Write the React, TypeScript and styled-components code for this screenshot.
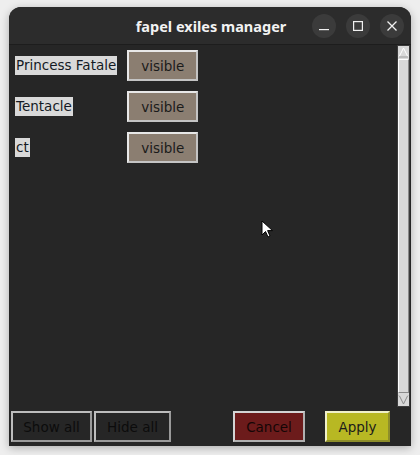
import React from "react";
import styled, { createGlobalStyle } from "styled-components";

const GlobalStyle = createGlobalStyle`
  html, body {
    margin: 0;
    padding: 0;
    background: #eeeeee;
  }
  body {
    width: 420px;
    height: 455px;
    overflow: hidden;
  }
`;

const Window = styled.div`
  position: relative;
  margin: 7px 9px 0 9px;
  width: 402px;
  height: 439px;
  border-radius: 12px 12px 0 0;
  background: #262626;
  box-shadow: 0 2px 9px rgba(0, 0, 0, 0.28);
  display: flex;
  flex-direction: column;
  overflow: hidden;
`;

const TitleBar = styled.div`
  position: relative;
  height: 37px;
  flex: none;
  background: #2c2c2c;
  border-bottom: 1px solid #1d1d1d;
  display: flex;
  align-items: center;
  justify-content: center;
`;

const Title = styled.div`
  font-family: "Noto Sans", "DejaVu Sans", sans-serif;
  font-weight: 700;
  font-size: 14.5px;
  color: #f2f2f2;
  margin-left: 2px;
`;

const Controls = styled.div`
  position: absolute;
  right: 7px;
  top: 7px;
  display: flex;
  gap: 10px;
`;

const CircleButton = styled.div`
  width: 24px;
  height: 24px;
  border-radius: 50%;
  background: #3b3b3b;
  display: flex;
  align-items: center;
  justify-content: center;
`;

const Body = styled.div`
  flex: 1;
  display: flex;
  min-height: 0;
`;

const ListArea = styled.div`
  flex: 1;
  padding: 5px 0 0 6px;
`;

const ExileGrid = styled.div`
  display: grid;
  grid-template-columns: auto auto;
  justify-content: start;
  column-gap: 10px;
  row-gap: 10px;
  align-items: center;
`;

const NameLabel = styled.div`
  justify-self: start;
  background: #d9d9d9;
  color: #141a24;
  font-family: "DejaVu Sans", sans-serif;
  font-size: 13.5px;
  line-height: 19px;
  padding: 0 1px;
`;

const TkButton = styled.div<{ $bg: string; $light: string; $dark: string; $w: number; $fg?: string }>`
  box-sizing: border-box;
  width: ${(p) => p.$w}px;
  height: 31px;
  background: ${(p) => p.$bg};
  border: 2px solid;
  border-color: ${(p) => p.$light} ${(p) => p.$dark} ${(p) => p.$dark} ${(p) => p.$light};
  color: ${(p) => p.$fg ?? "#1b1b1b"};
  font-family: "DejaVu Sans", sans-serif;
  font-size: 13.5px;
  display: flex;
  align-items: center;
  justify-content: center;
`;

const Scrollbar = styled.div`
  width: 13px;
  margin: 0 1px 1px 0;
  box-sizing: border-box;
  background: #c3c3c3;
  border: 1px solid #3c3c3c;
  display: flex;
  flex-direction: column;
`;

const Arrow = styled.div`
  height: 13px;
  flex: none;
  background: #d9d9d9;
  display: flex;
  align-items: center;
  justify-content: center;
`;

const Slider = styled.div`
  flex: 1;
  background: #d9d9d9;
  border: 1px solid;
  border-color: #ffffff #8a8a8a #8a8a8a #ffffff;
`;

const BottomBar = styled.div`
  height: 38px;
  flex: none;
  display: flex;
  align-items: flex-start;
  padding: 3px 21px 0 2px;
  box-sizing: border-box;
`;

const Group = styled.div<{ $gap: number }>`
  display: flex;
  gap: ${(p) => p.$gap}px;
`;

const Spacer = styled.div`
  flex: 1;
`;

const Cursor = styled.svg`
  position: absolute;
  left: 252px;
  top: 213px;
`;

const exiles = ["Princess Fatale", "Tentacle", "ct"];

export default function App() {
  return (
    <>
      <GlobalStyle />
      <Window>
        <TitleBar>
          <Title>fapel exiles manager</Title>
          <Controls>
            <CircleButton>
              <svg width="10" height="10" viewBox="0 0 10 10">
                <rect x="0" y="8" width="10" height="1.2" fill="#f0f0f0" />
              </svg>
            </CircleButton>
            <CircleButton>
              <svg width="10" height="10" viewBox="0 0 10 10">
                <rect x="0.6" y="0.6" width="8.8" height="8.8" fill="none" stroke="#f0f0f0" strokeWidth="1.2" />
              </svg>
            </CircleButton>
            <CircleButton>
              <svg width="10" height="10" viewBox="0 0 10 10">
                <path d="M0.5 0.5 L9.5 9.5 M9.5 0.5 L0.5 9.5" stroke="#f0f0f0" strokeWidth="1.3" />
              </svg>
            </CircleButton>
          </Controls>
        </TitleBar>
        <Body>
          <ListArea>
            <ExileGrid>
              {exiles.map((name) => (
                <React.Fragment key={name}>
                  <NameLabel>{name}</NameLabel>
                  <TkButton $bg="#8b7e71" $light="#e8e8e8" $dark="#c4c4c4" $w={71}>
                    visible
                  </TkButton>
                </React.Fragment>
              ))}
            </ExileGrid>
          </ListArea>
          <Scrollbar>
            <Arrow>
              <svg width="11" height="11" viewBox="0 0 11 11">
                <path d="M5.5 1 L10 10 L1 10 Z" fill="#d9d9d9" stroke="#ffffff" strokeWidth="1" />
                <path d="M10 10 L1 10" stroke="#8a8a8a" strokeWidth="1" />
              </svg>
            </Arrow>
            <Slider />
            <Arrow>
              <svg width="11" height="11" viewBox="0 0 11 11">
                <path d="M1 1 L10 1 L5.5 10 Z" fill="#d9d9d9" stroke="#8a8a8a" strokeWidth="1" />
                <path d="M1 1 L10 1" stroke="#ffffff" strokeWidth="1" />
              </svg>
            </Arrow>
          </Scrollbar>
        </Body>
        <BottomBar>
          <Group $gap={2}>
            <TkButton $bg="#262626" $light="#bdbdbd" $dark="#9a9a9a" $w={81} $fg="#0c0c0c">
              Show all
            </TkButton>
            <TkButton $bg="#262626" $light="#bdbdbd" $dark="#9a9a9a" $w={77} $fg="#0c0c0c">
              Hide all
            </TkButton>
          </Group>
          <Spacer />
          <Group $gap={20}>
            <TkButton $bg="#6c1b1b" $light="#d4d4d4" $dark="#b0b0b0" $w={72} $fg="#140606">
              Cancel
            </TkButton>
            <TkButton $bg="#b8b823" $light="#f0f0c8" $dark="#8e8e2a" $w={65}>
              Apply
            </TkButton>
          </Group>
        </BottomBar>
        <Cursor width="14" height="20" viewBox="0 0 14 20">
          <path
            d="M1 1 L1 15 L4.5 11.5 L7 17 L9 16 L6.6 10.6 L11.5 10.6 Z"
            fill="#ffffff"
            stroke="#000000"
            strokeWidth="1"
            strokeLinejoin="round"
          />
        </Cursor>
      </Window>
    </>
  );
}
